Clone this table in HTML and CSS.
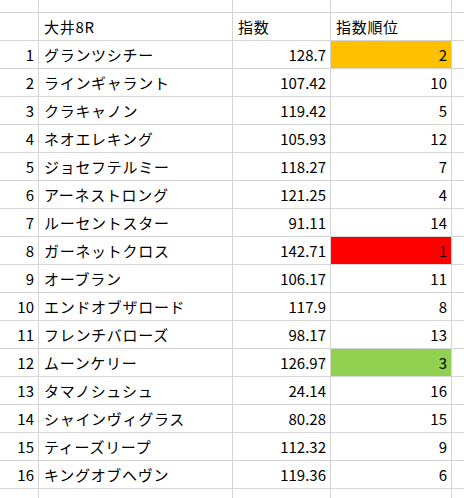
FILE: index.html
```html
<!DOCTYPE html>
<html lang="ja">
<head>
<meta charset="utf-8">
<link rel="stylesheet" href="styles.css">
</head>
<body>
<div class="sheet">
  <div class="c"></div><div class="c"></div><div class="c"></div><div class="c"></div><div class="c"></div>

  <div class="c"></div><div class="c t">大井8R</div><div class="c t">指数</div><div class="c t">指数順位</div><div class="c"></div>

  <div class="c n">1</div><div class="c t">グランツシチー</div><div class="c n">128.7</div><div class="c n orange">2</div><div class="c"></div>
  <div class="c n">2</div><div class="c t">ラインギャラント</div><div class="c n">107.42</div><div class="c n">10</div><div class="c"></div>
  <div class="c n">3</div><div class="c t">クラキャノン</div><div class="c n">119.42</div><div class="c n">5</div><div class="c"></div>
  <div class="c n">4</div><div class="c t">ネオエレキング</div><div class="c n">105.93</div><div class="c n">12</div><div class="c"></div>
  <div class="c n">5</div><div class="c t">ジョセフテルミー</div><div class="c n">118.27</div><div class="c n">7</div><div class="c"></div>
  <div class="c n">6</div><div class="c t">アーネストロング</div><div class="c n">121.25</div><div class="c n">4</div><div class="c"></div>
  <div class="c n">7</div><div class="c t">ルーセントスター</div><div class="c n">91.11</div><div class="c n">14</div><div class="c"></div>
  <div class="c n">8</div><div class="c t">ガーネットクロス</div><div class="c n">142.71</div><div class="c n red">1</div><div class="c"></div>
  <div class="c n">9</div><div class="c t">オーブラン</div><div class="c n">106.17</div><div class="c n">11</div><div class="c"></div>
  <div class="c n">10</div><div class="c t">エンドオブザロード</div><div class="c n">117.9</div><div class="c n">8</div><div class="c"></div>
  <div class="c n">11</div><div class="c t">フレンチバローズ</div><div class="c n">98.17</div><div class="c n">13</div><div class="c"></div>
  <div class="c n">12</div><div class="c t">ムーンケリー</div><div class="c n">126.97</div><div class="c n green">3</div><div class="c"></div>
  <div class="c n">13</div><div class="c t">タマノシュシュ</div><div class="c n">24.14</div><div class="c n">16</div><div class="c"></div>
  <div class="c n">14</div><div class="c t">シャインヴィグラス</div><div class="c n">80.28</div><div class="c n">15</div><div class="c"></div>
  <div class="c n">15</div><div class="c t">ティーズリープ</div><div class="c n">112.32</div><div class="c n">9</div><div class="c"></div>
  <div class="c n">16</div><div class="c t">キングオブヘヴン</div><div class="c n">119.36</div><div class="c n">6</div><div class="c"></div>

  <div class="c"></div><div class="c"></div><div class="c"></div><div class="c"></div><div class="c"></div>
</div>
</body>
</html>
```

FILE: styles.css
```css
html, body {
  margin: 0;
  padding: 0;
  background: #ffffff;
}
.sheet {
  display: grid;
  grid-template-columns: 38px 193px 97px 120px 12px;
  grid-template-rows: 12px repeat(17, 27px) 9px;
  gap: 1px;
  background: #d4d4d4;
  width: 464px;
  height: 498px;
  overflow: hidden;
  font-family: "Noto Sans CJK JP", sans-serif;
  font-size: 15px;
  color: #000000;
}
.c {
  background: #ffffff;
  display: flex;
  align-items: center;
  white-space: nowrap;
  overflow: hidden;
  line-height: 1;
}
.t {
  padding-left: 5px;
  letter-spacing: 0.7px;
}
.n {
  justify-content: flex-end;
  padding-right: 4px;
}
.orange { background: #ffc000; }
.red { background: #ff0000; }
.green { background: #92d050; }
```
